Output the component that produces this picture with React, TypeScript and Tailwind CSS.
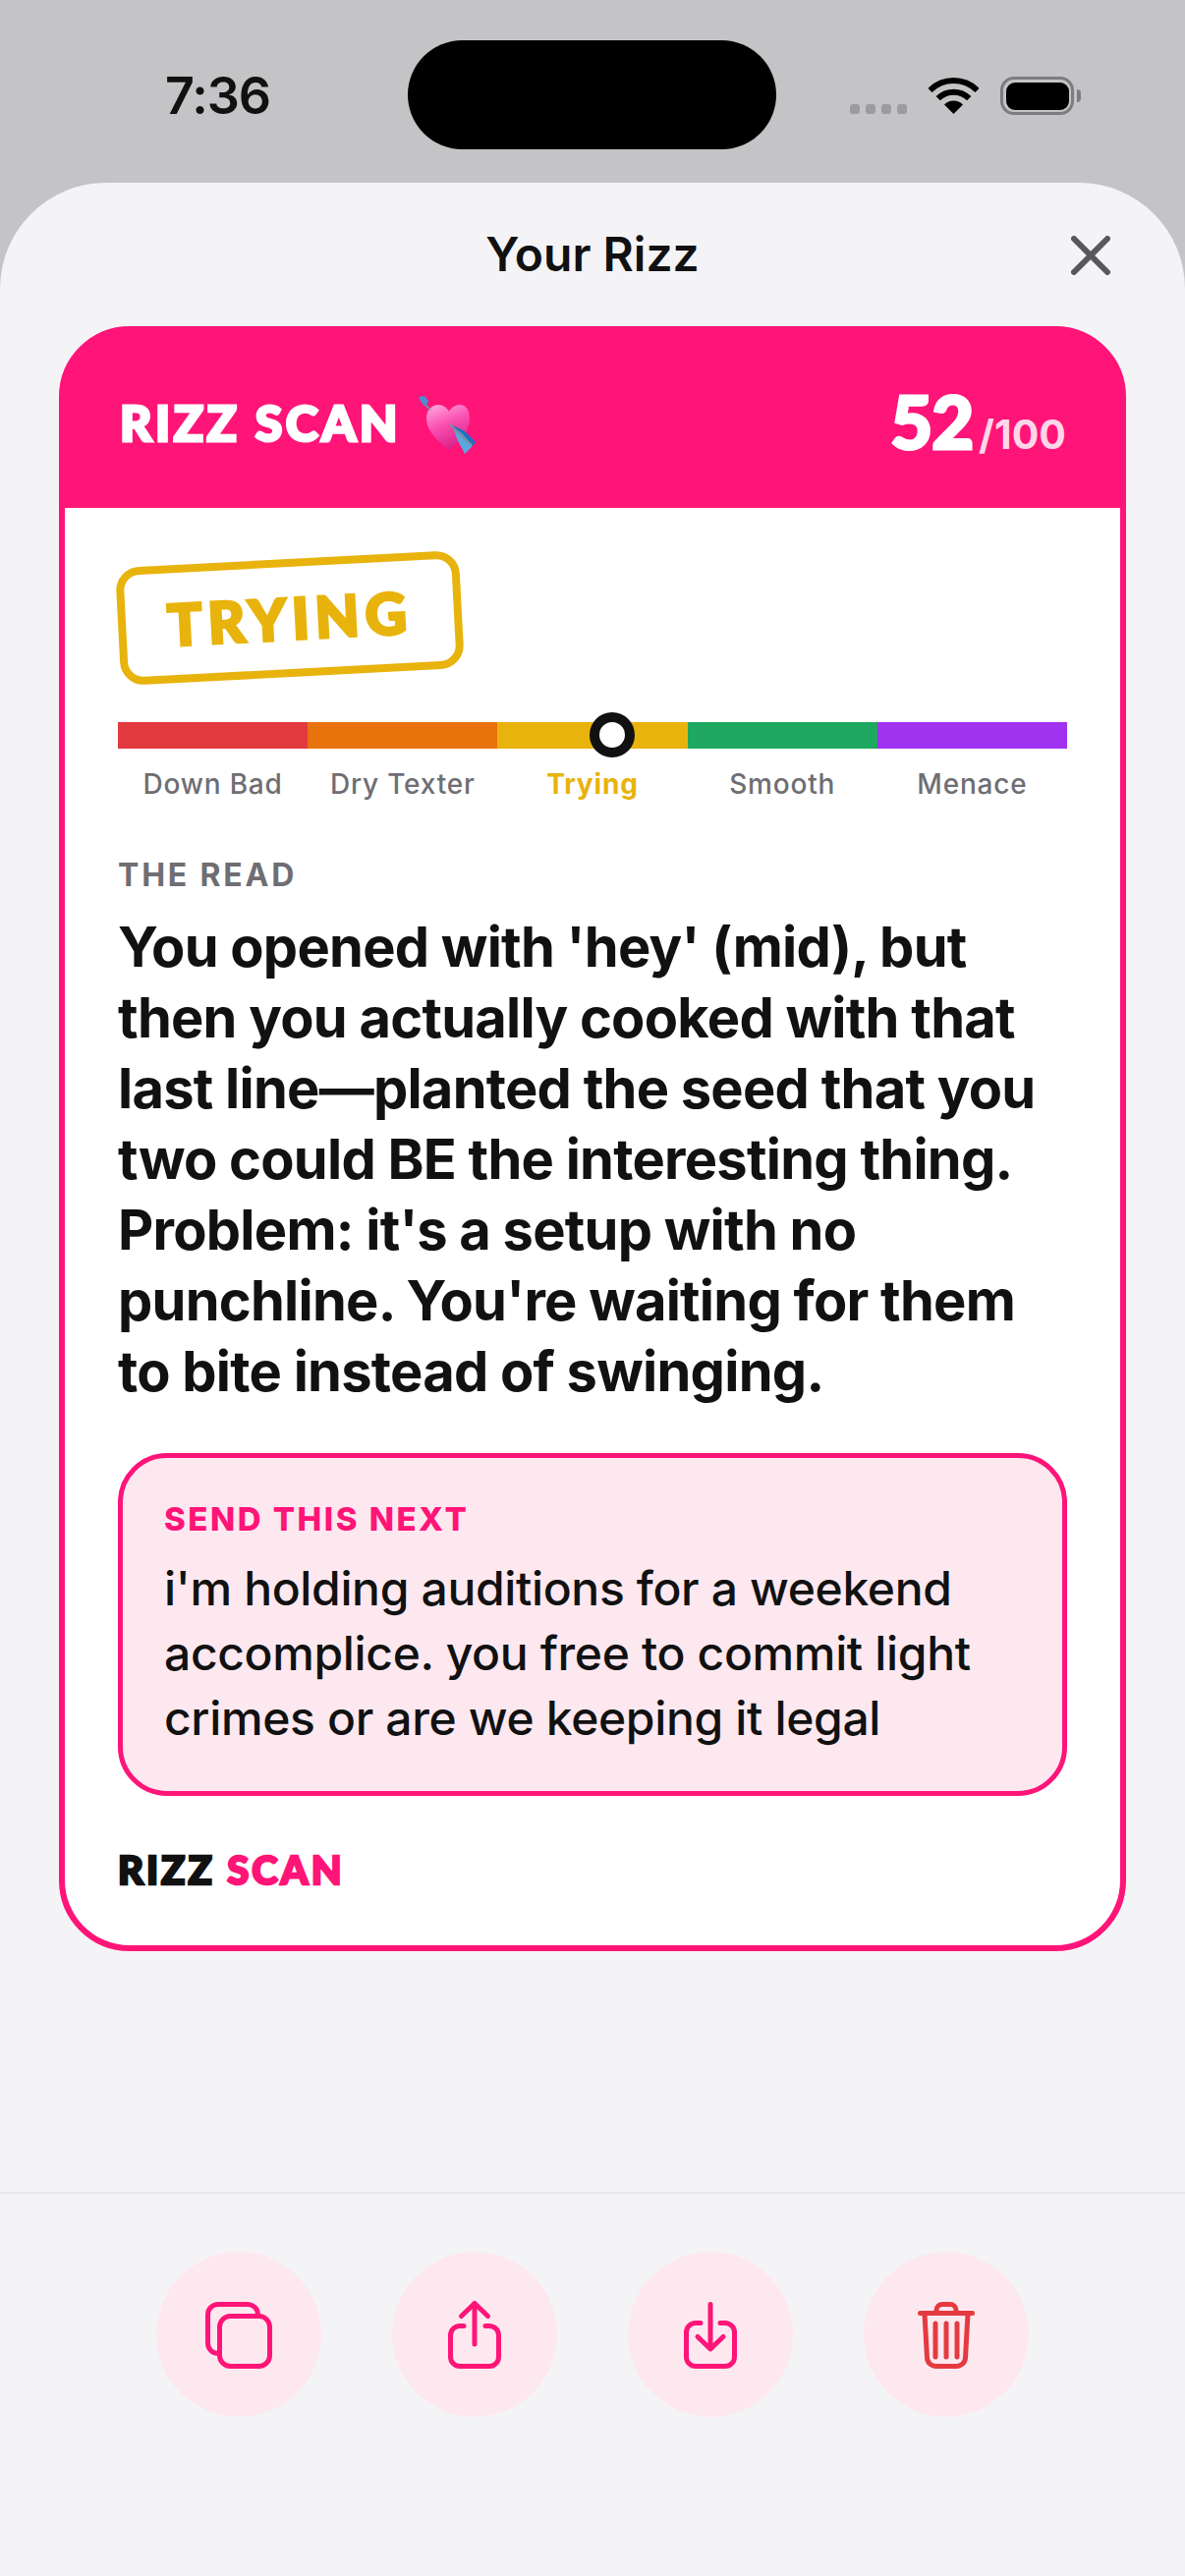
import React from "react";

const INTER = "font-['Inter','Noto_Sans',sans-serif]";
const DISPLAY = "font-['Lato','Inter',sans-serif]";

function Wifi() {
  return (
    <svg width="51" height="37" viewBox="0 0 51 37" fill="none" stroke="#000" strokeWidth="6">
      <path d="M1.5 13A34 34 0 0 1 49.5 13" />
      <path d="M9.7 21.2A22.3 22.3 0 0 1 41.3 21.2" />
      <path d="M25.5 37L16 27.5A13.4 13.4 0 0 1 35 27.5Z" fill="#000" stroke="none" />
    </svg>
  );
}

function Battery() {
  return (
    <div className="flex items-center gap-[3px]">
      <div className="w-[75px] h-[39px] rounded-[14px] border-[3.5px] border-[#7d7d7f] p-[2.5px]">
        <div className="w-full h-full rounded-[9px] bg-black" />
      </div>
      <div className="w-[4px] h-[13px] rounded-r-full bg-[#7d7d7f]" />
    </div>
  );
}

function Emoji() {
  return (
    <svg width="60" height="60" viewBox="0 0 60 60">
      <defs>
        <linearGradient id="h" x1="0.2" y1="0" x2="0.6" y2="1">
          <stop offset="0" stopColor="#ffa0dc" />
          <stop offset="0.45" stopColor="#f950b0" />
          <stop offset="1" stopColor="#d81f88" />
        </linearGradient>
      </defs>
      <path d="M31 55C20 46 8 36 8 23C8 14 14 9 20 9C25 9 29 12 31 16C33 12 37 9 42 9C48 9 52 14 52 23C52 36 42 46 31 55Z" fill="url(#h)" />
      <path d="M5 7L12 14" stroke="#7d8c99" strokeWidth="2" />
      <path d="M0 1L6 0L10 5L7 11L3 7Z" fill="#4b8fd0" />
      <path d="M35 30L47 36L58 47L55 51L42 42Z" fill="#1873c4" />
      <path d="M35 32L40 46L47 59L55 51L44 38Z" fill="#5aa6de" />
      <path d="M32 29L54 50" stroke="#7d8c99" strokeWidth="2" />
    </svg>
  );
}

function IconCopy() {
  return (
    <svg width="72" height="72" viewBox="0 0 72 72" fill="none" stroke="currentColor" strokeWidth="5" strokeLinecap="round" strokeLinejoin="round">
      <rect x="16.5" y="17.5" width="51" height="51" rx="11" />
      <path d="M55.5 16A10.5 10.5 0 0 0 45 5.5H15A10.5 10.5 0 0 0 4.5 16V45A10.5 10.5 0 0 0 15 55.5H16" />
    </svg>
  );
}
function IconShare() {
  return (
    <svg width="72" height="72" viewBox="0 0 72 72" fill="none" stroke="currentColor" strokeWidth="5" strokeLinecap="round" strokeLinejoin="round">
      <path d="M25 27.5H21A9.5 9.5 0 0 0 11.5 37V59A9.5 9.5 0 0 0 21 68.5H51A9.5 9.5 0 0 0 60.5 59V37A9.5 9.5 0 0 0 51 27.5H47" />
      <path d="M36 5V46" />
      <path d="M22.5 17.5L36 4.5L49.5 17.5" />
    </svg>
  );
}
function IconDownload() {
  return (
    <svg width="72" height="72" viewBox="0 0 72 72" fill="none" stroke="currentColor" strokeWidth="5" strokeLinecap="round" strokeLinejoin="round">
      <path d="M26 24.5H21A9.5 9.5 0 0 0 11.5 34V59A9.5 9.5 0 0 0 21 68.5H51A9.5 9.5 0 0 0 60.5 59V34A9.5 9.5 0 0 0 51 24.5H46" />
      <path d="M36 5.5V50" />
      <path d="M23 38.5L36 51L49 38.5" />
    </svg>
  );
}
function IconTrash() {
  return (
    <svg width="72" height="72" viewBox="0 0 72 72" fill="none" stroke="currentColor" strokeWidth="5" strokeLinecap="round" strokeLinejoin="round">
      <path d="M9.5 14.5H62.5" />
      <path d="M26 14V11.5A6 6 0 0 1 32 5.5H40A6 6 0 0 1 46 11.5V14" />
      <path d="M14 15L16.5 60A9 9 0 0 0 25.5 68.5H46.5A9 9 0 0 0 55.5 60L58 15" />
      <path d="M25 25V59M36 25V59M47 25V59" />
    </svg>
  );
}

const segs = [
  { label: "Down Bad", bar: "bg-[#e23a3e]", text: "text-[#6e6e73] font-medium" },
  { label: "Dry Texter", bar: "bg-[#e8720c]", text: "text-[#6e6e73] font-medium" },
  { label: "Trying", bar: "bg-[#e8b30c]", text: "text-[#e8b30c] font-bold" },
  { label: "Smooth", bar: "bg-[#1fa85f]", text: "text-[#6e6e73] font-medium" },
  { label: "Menace", bar: "bg-[#a033f0]", text: "text-[#6e6e73] font-medium" },
];

export default function App() {
  return (
    <div className={`${INTER} w-[1206px] h-[2622px] flex flex-col bg-[#c4c4c6] overflow-hidden text-[#111]`}>
      {/* status bar */}
      <div className="h-[186px] shrink-0 flex items-start">
        <div className="w-[415px] pt-[70px] pl-[168px] text-[52px] leading-[56px] tracking-[-1px] font-semibold">7:36</div>
        <div className="mt-[41px] w-[375px] h-[111px] rounded-[56px] bg-black" />
        <div className="flex-1 flex items-start pt-[78px] pl-[75px]">
          <div className="flex gap-[6px] mt-[28px]">
            <div className="w-[10px] h-[10px] rounded-[3px] bg-[#9c9c9e]" />
            <div className="w-[10px] h-[10px] rounded-[3px] bg-[#9c9c9e]" />
            <div className="w-[10px] h-[10px] rounded-[3px] bg-[#9c9c9e]" />
            <div className="w-[10px] h-[10px] rounded-[3px] bg-[#9c9c9e]" />
          </div>
          <div className="ml-[22px] mt-[1px]"><Wifi /></div>
          <div className="ml-[22px]"><Battery /></div>
        </div>
      </div>

      {/* sheet */}
      <div className="flex-1 flex flex-col bg-[#f4f4f6] rounded-t-[108px]">
        <div className="h-[146px] shrink-0 flex items-start justify-center relative pt-[45px]">
          <div className="text-[48px] leading-[56px] font-semibold">Your Rizz</div>
          <svg className="absolute left-[1090px] top-[54px]" width="40" height="40" viewBox="0 0 40 40" fill="none" stroke="#58585c" strokeWidth="6" strokeLinecap="round">
            <path d="M3 3L37 37M37 3L3 37" />
          </svg>
        </div>

        {/* card */}
        <div className="mx-[60px] h-[1654px] shrink-0 rounded-[72px] border-[6px] border-[#ff1478] bg-[#ff1478] flex flex-col">
          <div className="h-[179px] shrink-0 flex items-start justify-between pl-[56px] pr-[55px]">
            <div className="flex items-start mt-[62px]">
              <div className={`${DISPLAY} font-black text-white text-[50px] leading-[60px] tracking-[3.5px] [-webkit-text-stroke:3px_white]`}>RIZZ SCAN</div>
              <div className="ml-[18px] mt-[3px]"><Emoji /></div>
            </div>
            <div className="flex items-baseline mt-[49px]">
              <span className={`${DISPLAY} text-[74px] leading-[84px] font-black tracking-[-1px] text-white [-webkit-text-stroke:3px_white]`}>52</span>
              <span className="text-[41px] font-bold text-[#ffd6e8] ml-[6px]">/100</span>
            </div>
          </div>

          <div className="flex-1 bg-white rounded-b-[66px] px-[54px] pt-[52px]">
            <div className="w-[350px] h-[120px] rounded-[24px] border-[8px] border-[#e8b30c] -rotate-3 flex items-center justify-center">
              <span className={`${DISPLAY} font-black text-[58px] leading-[70px] tracking-[6px] text-[#e8b30c] [-webkit-text-stroke:3px_#e8b30c]`}>TRYING</span>
            </div>

            <div className="relative mt-[46px] h-[27px] flex">
              {segs.map((s) => (
                <div key={s.label} className={`flex-1 ${s.bar}`} />
              ))}
              <div className="absolute left-[480px] -top-[10px] w-[46px] h-[46px] rounded-full border-[10px] border-[#111] bg-white" />
            </div>
            <div className="grid grid-cols-5 mt-[18px]">
              {segs.map((s) => (
                <div key={s.label} className={`text-center text-[28px] leading-[36px] tracking-[0.8px] ${s.text}`}>{s.label}</div>
              ))}
            </div>

            <div className="mt-[55px] text-[32px] leading-[40px] font-bold tracking-[2.8px] text-[#6e6e73]">THE READ</div>
            <div className="mt-[17px] text-[56px] leading-[72px] font-bold tracking-[-0.75px] text-[#111]">
              You opened with 'hey' (mid), but<br />
              then you actually cooked with that<br />
              last line—planted the seed that you<br />
              two could BE the interesting thing.<br />
              Problem: it's a setup with no<br />
              punchline. You're waiting for them<br />
              to bite instead of swinging.
            </div>

            <div className="mt-[47px] h-[349px] rounded-[50px] border-[5px] border-[#ff1478] bg-[#fde8f0] pl-[42px] pr-[30px] pt-[42px]">
              <div className="text-[33px] leading-[40px] font-extrabold tracking-[2.5px] text-[#ff1478]">SEND THIS NEXT</div>
              <div className="mt-[18px] text-[48px] leading-[66px] font-medium tracking-[-0.35px] text-[#111]">
                i'm holding auditions for a weekend<br />
                accomplice. you free to commit light<br />
                crimes or are we keeping it legal
              </div>
            </div>

            <div className={`${DISPLAY} mt-[50px] font-black text-[40px] leading-[50px] tracking-[3px]`}>
              <span className="text-[#111] [-webkit-text-stroke:2.5px_#111]">RIZZ</span> <span className="text-[#ff1478] [-webkit-text-stroke:2.5px_#ff1478]">SCAN</span>
            </div>
          </div>
        </div>

        <div className="flex-1" />

        <div className="h-[391px] shrink-0 border-t-2 border-[#e6e6ea] flex justify-center gap-[72px] pt-[59px]">
          <div className="w-[168px] h-[168px] rounded-full bg-[#fee8f0] text-[#ff1478] flex items-center justify-center"><IconCopy /></div>
          <div className="w-[168px] h-[168px] rounded-full bg-[#fee8f0] text-[#ff1478] flex items-center justify-center"><IconShare /></div>
          <div className="w-[168px] h-[168px] rounded-full bg-[#fee8f0] text-[#ff1478] flex items-center justify-center"><IconDownload /></div>
          <div className="w-[168px] h-[168px] rounded-full bg-[#fee8f0] text-[#e53a40] flex items-center justify-center"><IconTrash /></div>
        </div>
      </div>
    </div>
  );
}
